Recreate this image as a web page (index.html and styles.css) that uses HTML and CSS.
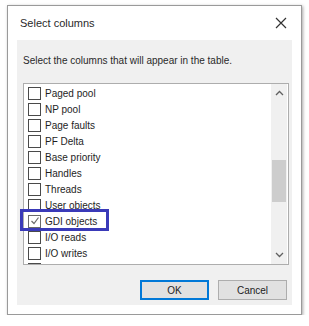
FILE: index.html
```html
<!DOCTYPE html>
<html lang="en">
  <head>
    <meta charset="UTF-8" />
    <meta name="viewport" content="width=device-width, initial-scale=1.0" />
    <title>Select columns</title>
    <link rel="stylesheet" href="styles.css">
  </head>
  <body>
    <div class="dialog">
      <div class="titlebar">
        <span class="title">Select columns</span>
        <svg class="close" width="12" height="12" viewBox="0 0 12 12">
          <path d="M1 1 L11 11 M11 1 L1 11" stroke="#333" stroke-width="1.2" fill="none" />
        </svg>
      </div>
      <div class="content">
        <p class="intro">Select the columns that will appear in the table.</p>
        <div class="listbox">
          <div class="rows">
            <label class="row"><span class="box"></span>Paged pool</label>
            <label class="row"><span class="box"></span>NP pool</label>
            <label class="row"><span class="box"></span>Page faults</label>
            <label class="row"><span class="box"></span>PF Delta</label>
            <label class="row"><span class="box"></span>Base priority</label>
            <label class="row"><span class="box"></span>Handles</label>
            <label class="row"><span class="box"></span>Threads</label>
            <label class="row"><span class="box"></span>User objects</label>
            <label class="row marked">
              <span class="box checked">
                <svg width="10" height="10" viewBox="0 0 10 10">
                  <path d="M1.5 5 L4 7.5 L8.5 1.5" stroke="#6a6a6a" stroke-width="1.2" fill="none" />
                </svg>
              </span>GDI objects
              <span class="highlight"></span>
            </label>
            <label class="row"><span class="box"></span>I/O reads</label>
            <label class="row"><span class="box"></span>I/O writes</label>
            <label class="row"><span class="box"></span></label>
          </div>
          <div class="scrollbar">
            <svg class="arrow" width="9" height="6" viewBox="0 0 9 6">
              <path d="M1 5 L4.5 1.5 L8 5" stroke="#606060" stroke-width="1.3" fill="none" />
            </svg>
            <div class="track"><div class="thumb"></div></div>
            <svg class="arrow" width="9" height="6" viewBox="0 0 9 6">
              <path d="M1 1 L4.5 4.5 L8 1" stroke="#606060" stroke-width="1.3" fill="none" />
            </svg>
          </div>
        </div>
        <div class="buttons">
          <button class="btn default">OK</button>
          <button class="btn">Cancel</button>
        </div>
      </div>
    </div>
  </body>
</html>
```

FILE: styles.css
```css
body {
  margin: 0;
  background: #ffffff;
  font-family: "Liberation Sans", Arial, sans-serif;
  font-size: 10px;
  color: #222222;
}
.dialog {
  margin: 5px 0 0 7px;
  width: 293px;
  height: 308px;
  border: 1px solid #9a9a9a;
  box-shadow: 1px 1px 3px rgb(0 0 0 / 0.35);
  background: #ffffff;
  display: flex;
  flex-direction: column;
}
.titlebar {
  height: 34px;
  display: flex;
  align-items: center;
  justify-content: space-between;
  padding: 0 14px 0 12px;
}
.title {
  font-size: 11px;
  color: #2a2a2a;
}
.content {
  margin: 0 9px;
  background: #f0f0f0;
  height: 265px;
  padding: 0 3px 0 6px;
  display: flex;
  flex-direction: column;
}
.intro {
  margin: 0;
  height: 43px;
  line-height: 42px;
  color: #2a2a2a;
}
.listbox {
  height: 180px;
  border: 1px solid #adadad;
  background: #ffffff;
  display: flex;
  overflow-x: visible;
  overflow-y: clip;
}
.rows {
  flex: 1;
  padding: 1px 0 0 4px;
}
.row {
  display: flex;
  align-items: center;
  height: 16px;
  gap: 4px;
  position: relative;
  color: #1e1e1e;
}
.box {
  width: 11px;
  height: 11px;
  border: 1px solid #4a4a4a;
  background: #ffffff;
  display: flex;
  align-items: center;
  justify-content: center;
}
.box.checked {
  border-color: #6a6a6a;
}
.highlight {
  position: absolute;
  left: -8px;
  top: -4px;
  width: 83px;
  height: 16px;
  border: 3px solid #3a3ab8;
}
.scrollbar {
  width: 16px;
  margin-right: 1px;
  background: #f0f0f0;
  display: flex;
  flex-direction: column;
  align-items: center;
}
.arrow {
  margin: 6px 0;
}
.track {
  flex: 1;
  width: 100%;
  padding-top: 58px;
}
.thumb {
  margin: 0 auto;
  width: 14px;
  height: 42px;
  background: #cdcdcd;
}
.buttons {
  display: flex;
  justify-content: flex-end;
  gap: 9px;
  padding: 15px 2px 0 0;
}
.btn {
  width: 69px;
  height: 20px;
  padding: 0;
  font: inherit;
  color: #222222;
  background: #e1e1e1;
  border: 1px solid #adadad;
}
.btn.default {
  border: 2px solid #0078d7;
}
```
